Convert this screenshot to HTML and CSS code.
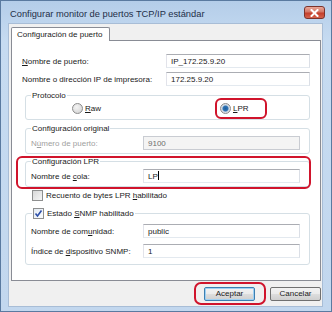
FILE: index.html
```html
<!DOCTYPE html>
<html lang="es">
<head>
    <meta charset="UTF-8">
    <title>Configurar monitor de puertos TCP/IP estándar</title>
    <link rel="stylesheet" href="styles.css">
</head>
<body>

    <div class="window">
        <div class="titlebar">
            <span class="title">Configurar monitor de puertos TCP/IP estándar</span>
            <span class="close-btn">
                <svg width="9" height="8" viewBox="0 0 9 8">
                    <path d="M1.5 1 L7.5 7 M7.5 1 L1.5 7" stroke="#fff" stroke-width="2" stroke-linecap="square"/>
                </svg>
            </span>
        </div>

        <div class="client">
            <div class="tabs">
                <span class="tab">Configuración de puerto</span>
            </div>

            <div class="panel">
                <div class="row first">
                    <label><u>N</u>ombre de puerto:</label>
                    <span class="input wide">IP_172.25.9.20</span>
                </div>
                <div class="row">
                    <label>Nombre o dirección IP de impresora:</label>
                    <span class="input wide">172.25.9.20</span>
                </div>

                <fieldset class="group protocol">
                    <legend>Protocolo</legend>
                    <div class="radios">
                        <span class="radio-item raw"><span class="radio"></span><span><u>R</u>aw</span></span>
                        <span class="radio-item lpr"><span class="radio checked"></span><span><u>L</u>PR</span><span class="mark"></span></span>
                    </div>
                </fieldset>

                <fieldset class="group original">
                    <legend>Configuración original</legend>
                    <div class="field disabled">
                        <label>N<u>ú</u>mero de puerto:</label>
                        <span class="input">9100</span>
                    </div>
                </fieldset>

                <fieldset class="group lpr-group">
                    <legend>Configuración LPR</legend>
                    <div class="field">
                        <label>Nombre de <u>c</u>ola:</label>
                        <span class="input">LP<span class="caret"></span></span>
                    </div>
                    <span class="mark"></span>
                </fieldset>

                <div class="check-row">
                    <span class="checkbox"></span>
                    <span>Recuento de bytes LPR <u>h</u>abilitado</span>
                </div>

                <fieldset class="group snmp">
                    <legend><span class="checkbox checked">
                        <svg width="9" height="9" viewBox="0 0 9 9">
                            <path d="M1.5 4.5 L3.5 7 L7.5 1.5" fill="none" stroke="#2c4ea8" stroke-width="1.6"/>
                        </svg>
                    </span><span>Estado <u>S</u>NMP habilitado</span></legend>
                    <div class="field">
                        <label>Nombre de com<u>u</u>nidad:</label>
                        <span class="input">public</span>
                    </div>
                    <div class="field">
                        <label>Índice de <u>d</u>ispositivo SNMP:</label>
                        <span class="input">1</span>
                    </div>
                </fieldset>
            </div>

            <div class="buttons">
                <span class="btn default">Aceptar<span class="mark"></span></span>
                <span class="btn">Cancelar</span>
            </div>
        </div>
    </div>

</body>
</html>
```

FILE: styles.css
```css
/* General Styles */
body {
    margin: 0;
    padding: 0;
    font-family: "Liberation Sans", Arial, sans-serif;
    font-size: 8px;
    color: #1a1a1a;
    background-color: #c2d7ee;
    white-space: nowrap;
}

u {
    text-decoration-thickness: 1px;
    text-underline-offset: 1px;
}

/* Window frame */
.window {
    width: 332px;
    height: 312px;
    box-sizing: border-box;
    border: 1px solid #5a7aa0;
    background: linear-gradient(#b4cde9, #c6dbf1 40px, #c2d7ee);
    display: flex;
    flex-direction: column;
}

.titlebar {
    height: 22px;
    display: flex;
    align-items: flex-start;
    padding-left: 9px;
}

.title {
    font-size: 9.3px;
    color: #1e2f48;
    margin-top: 8px;
}

.close-btn {
    margin-left: auto;
    margin-right: 6px;
    margin-top: 5px;
    width: 21px;
    height: 13px;
    box-sizing: border-box;
    border: 1px solid #7c332c;
    border-radius: 3px;
    background: linear-gradient(#e9a899, #d37565 45%, #c43f2c 55%, #d4624c);
    display: flex;
    align-items: center;
    justify-content: center;
}

/* Client area */
.client {
    flex: 1;
    margin: 0 8px 4px 7px;
    background-color: #f0f0f0;
    border: 1px solid #a8bdd6;
    padding: 3px 2px 0 2px;
}

.tabs {
    display: flex;
    height: 13px;
    position: relative;
    z-index: 1;
}

.tab {
    width: 99px;
    box-sizing: border-box;
    height: 14px;
    background-color: #fff;
    border: 1px solid #898c95;
    border-bottom: none;
    border-radius: 2px 2px 0 0;
    padding: 2px 0 0 5px;
    font-size: 8px;
}

.panel {
    width: 310px;
    height: 241px;
    box-sizing: border-box;
    background-color: #fff;
    border: 1px solid #898c95;
    padding: 0 10px;
}

.row {
    display: flex;
    align-items: center;
    justify-content: space-between;
    margin-top: 4px;
}

.row.first {
    margin-top: 13px;
}

.input {
    display: block;
    height: 14px;
    box-sizing: border-box;
    border: 1px solid #abadb3;
    border-left-color: #e2e3ea;
    border-right-color: #dbdfe6;
    border-bottom-color: #e3e9ef;
    background-color: #fff;
    padding: 1px 3px 0 4px;
    font-size: 8px;
    line-height: 11px;
    width: 157px;
}

.input.wide {
    width: 144px;
}

.caret {
    display: inline-block;
    width: 1px;
    height: 9px;
    background-color: #000;
    vertical-align: -1px;
}

/* Group boxes */
.group {
    margin: 0 0 0 3px;
    padding: 0 9px 0 5px;
    border: 1px solid #d5dfe5;
    border-radius: 3px;
    position: relative;
}

.group legend {
    padding: 0 1px;
    margin-left: 0;
    line-height: 11px;
    display: flex;
    align-items: center;
}

.protocol {
    margin-top: 4px;
    height: 30px;
    box-sizing: border-box;
}

.radios {
    display: flex;
    height: 17px;
    align-items: center;
    margin-top: -1px;
}

.radio-item {
    display: flex;
    align-items: center;
    position: relative;
}

.radio-item.raw {
    margin-left: 41px;
}

.radio-item.lpr {
    margin-left: 119px;
}

.radio {
    width: 11px;
    height: 11px;
    box-sizing: border-box;
    border-radius: 50%;
    border: 1px solid #8b8b8b;
    background: radial-gradient(circle at 40% 35%, #f4f4f4, #cfcfcf);
    margin-right: 2px;
}

.radio.checked {
    background: radial-gradient(circle, #1d5f9e 0, #2f74b5 2.5px, #cfd9e3 3.5px, #e8eef3);
}

.radio-item .mark {
    position: absolute;
    left: -5px;
    right: -18px;
    top: -5px;
    bottom: -5px;
    border: 2px solid #d0142c;
    border-radius: 6px;
}

.original {
    margin-top: 3px;
    height: 31px;
    box-sizing: border-box;
}

.field {
    display: flex;
    align-items: center;
    justify-content: space-between;
    margin-top: 2px;
}

.field.disabled {
    color: #a0a0a0;
}

.field.disabled .input {
    background-color: #f4f4f4;
    border-color: #c9ccd2;
    color: #6d6d6d;
}

.lpr-group {
    margin-top: 2px;
    height: 31px;
    box-sizing: border-box;
}

.lpr-group .field {
    margin-top: 2px;
}

.lpr-group .mark {
    position: absolute;
    left: -10px;
    right: -2px;
    top: -11px;
    bottom: -3px;
    border: 2px solid #d0142c;
    border-radius: 6px;
}

.check-row {
    display: flex;
    align-items: center;
    margin: 2px 0 0 10px;
    height: 12px;
}

.checkbox {
    width: 11px;
    height: 11px;
    box-sizing: border-box;
    border: 1px solid #8e8f8f;
    background: linear-gradient(135deg, #d8d8d8, #f6f6f6);
    margin-right: 3px;
    display: inline-flex;
    align-items: center;
    justify-content: center;
}

.checkbox.checked {
    background: linear-gradient(135deg, #e4ebf3, #fafcfe);
}

.snmp {
    margin-top: 7px;
    height: 57px;
    box-sizing: border-box;
}

.snmp legend {
    margin-left: 1px;
}

.snmp .field {
    margin-top: 5px;
}

.snmp .field + .field {
    margin-top: 6px;
}

/* Buttons */
.buttons {
    display: flex;
    justify-content: flex-end;
    gap: 15px;
    margin-top: 6px;
    width: 310px;
}

.btn {
    width: 51px;
    height: 14px;
    box-sizing: border-box;
    border: 1px solid #707070;
    border-radius: 2px;
    background: linear-gradient(#f2f2f2, #ebebeb 48%, #dddddd 52%, #cfcfcf);
    font-size: 8px;
    line-height: 12px;
    text-align: center;
    position: relative;
}

.btn.default {
    border-color: #3c7fb1;
    box-shadow: inset 0 0 0 1px #9fd0f3;
}

.btn .mark {
    position: absolute;
    left: -11px;
    right: -12px;
    top: -6px;
    bottom: -5px;
    border: 2px solid #d0142c;
    border-radius: 7px;
}
```
